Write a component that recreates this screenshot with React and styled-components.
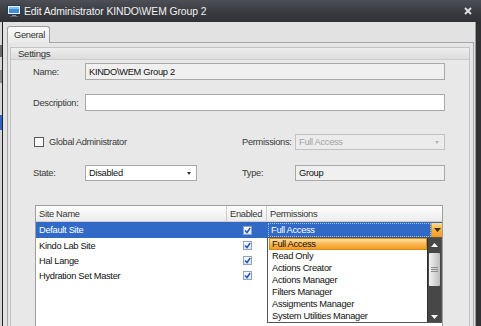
import React from 'react';
import styled, { createGlobalStyle } from 'styled-components';

const GlobalStyle = createGlobalStyle`
  html, body {
    margin: 0;
    padding: 0;
    background: #2e2f32;
  }
  body {
    font-family: "Liberation Sans", Arial, sans-serif;
    font-size: 9.3px;
    letter-spacing: -0.3px;
    color: #222;
  }
  #root {
    width: 481px;
    height: 326px;
    overflow: hidden;
  }
`;

const Screen = styled.div`
  width: 481px;
  height: 326px;
  display: flex;
  flex-direction: column;
  overflow: hidden;
`;

const TitleBar = styled.div`
  flex: none;
  height: 22px;
  display: flex;
  align-items: center;
  gap: 3px;
  padding: 0 9px 0 7px;
  background: linear-gradient(#4c4f55, #393b40 55%, #2f3135);
  color: #f2f2f2;
  font-size: 10.4px;
`;

const TitleText = styled.span`
  flex: 1;
  letter-spacing: -0.1px;
`;

const Frame = styled.div`
  flex: 1;
  min-height: 0;
  display: flex;
`;

// sliver of the application window behind the dialog
const Backdrop = styled.div`
  width: 2px;
  border-right: 1px solid #1f1f1f;
  background: linear-gradient(
    #d6d6d6 0 23px,
    #6b6b6b 23px 35px,
    #d6d6d6 35px 48px,
    #8d8d8d 48px 61px,
    #d6d6d6 61px 93px,
    #2f66c2 93px 108px,
    #d6d6d6 108px
  );
`;

const DarkEdge = styled.div`
  width: 5px;
  background: #303135;
  border-left: 1px solid #9a9a9a;
`;

const Window = styled.div`
  flex: 1;
  display: flex;
  flex-direction: column;
  padding: 4px 1px 0 4px;
  background: #e2e2e2;
`;

const TabStrip = styled.div`
  display: flex;
  height: 16px;
`;

const Tab = styled.div`
  position: relative;
  z-index: 1;
  width: 43px;
  height: 17px;
  box-sizing: border-box;
  padding: 3px 0 0 6px;
  border: 1px solid #9c9c9c;
  border-bottom: none;
  border-radius: 3px 3px 0 0;
  background: linear-gradient(#fbfbfb, #e9e9e9);
  color: #333;
`;

const TabPanel = styled.div`
  flex: 1;
  min-height: 0;
  display: flex;
  border: 1px solid #a6a6a6;
  border-bottom: none;
  padding: 4px 3px 0 2px;
  background: #e6e6e6;
`;

const Group = styled.div`
  flex: 1;
  display: flex;
  flex-direction: column;
  border: 1px solid #c3c3c3;
  border-bottom: none;
  overflow: hidden;
`;

const GroupHeader = styled.div`
  height: 16px;
  display: flex;
  align-items: center;
  padding-left: 7px;
  background: linear-gradient(#eeeeee, #dcdcdc);
  border-bottom: 1px solid #cbcbcb;
  color: #333;
  font-size: 9.6px;
`;

const GroupBody = styled.div`
  flex: 1;
  padding: 3px 0 0 22px;
  background: #e8e8e8;
`;

const Form = styled.div`
  display: grid;
  grid-template-columns: 52px 112px 45px 53px 150px;
  grid-template-rows: 17px 14px 17px 23px 16px 15px 16px;
  align-items: center;
`;

const Label = styled.span`
  grid-row: ${p => p.row};
  grid-column: ${p => p.col || 1};
  color: #3a3a3a;
`;

const Field = styled.div`
  grid-row: ${p => p.row};
  grid-column: ${p => p.span};
  height: ${p => p.h || 17}px;
  box-sizing: border-box;
  display: flex;
  align-items: center;
  padding: 0 3px;
  border: 1px solid ${p => (p.disabled ? '#c2c2c2' : '#a9a9a9')};
  background: ${p => (p.readOnly ? '#f0f0f0' : p.disabled ? '#ececec' : '#fff')};
  color: ${p => (p.disabled ? '#a3a3a3' : '#111')};
`;

const FieldText = styled.span`
  flex: 1;
`;

const Caret = styled.span`
  width: 0;
  height: 0;
  margin-right: 2px;
  border-left: 2.5px solid transparent;
  border-right: 2.5px solid transparent;
  border-top: 3px solid ${p => p.color || '#333'};
`;

const CheckRow = styled.label`
  grid-row: 5;
  grid-column: 1 / 4;
  display: flex;
  align-items: center;
  gap: 5px;
  padding-left: 1px;
  color: #3a3a3a;
`;

const Box = styled.span`
  width: 10px;
  height: 10px;
  box-sizing: border-box;
  border: 1px solid #5a5a5a;
  background: #fafafa;
`;

const SiteGrid = styled.div`
  position: relative;
  margin: 24px 0 0 2px;
  width: 408px;
  height: 140px;
  box-sizing: border-box;
  border: 1px solid #9e9e9e;
  background: #fff;
`;

const Row = styled.div`
  display: grid;
  grid-template-columns: 191px 40px 1fr;
  height: ${p => p.h || 15}px;
  align-items: stretch;
  background: ${p => (p.selected ? '#3169c6' : 'transparent')};
  color: ${p => (p.selected ? '#fff' : '#111')};
`;

const HeaderRow = styled(Row)`
  height: 16px;
  box-sizing: border-box;
  background: linear-gradient(#ffffff, #ececec);
  border-bottom: 1px solid #cfcfcf;
  color: #333;
`;

const HeaderCell = styled.div`
  display: flex;
  align-items: center;
  padding-left: 3px;
  border-right: ${p => (p.last ? 'none' : '1px solid #cdcdcd')};
`;

const Cell = styled.div`
  display: flex;
  align-items: center;
  justify-content: ${p => (p.center ? 'center' : 'flex-start')};
  padding-left: ${p => (p.center ? 0 : 3)}px;
`;

const CheckCell = styled.span`
  width: 9px;
  height: 9px;
  box-sizing: border-box;
  display: flex;
  align-items: center;
  justify-content: center;
  border: 1px solid #8ea4c2;
  background: linear-gradient(#ffffff, #dfe6f0);
`;

const Editor = styled.div`
  display: flex;
  align-items: stretch;
  padding: 1px 0 1px 1px;
`;

const EditorText = styled.div`
  flex: 1;
  display: flex;
  align-items: center;
  padding-left: 2px;
  border: 1px dotted #a9c0ea;
  color: #fff;
`;

const DropButton = styled.div`
  width: 10px;
  display: flex;
  align-items: center;
  justify-content: center;
  background: linear-gradient(#ffd98c, #f7b13f 55%, #f29c1e);
  border-left: 1px solid #d99a3a;
`;

const Popup = styled.div`
  position: absolute;
  top: 31px;
  left: 231px;
  width: 175px;
  height: 86px;
  box-sizing: border-box;
  display: flex;
  border: 1px solid #555;
  background: #fff;
`;

const List = styled.div`
  flex: 1;
  display: flex;
  flex-direction: column;
  padding-left: 1px;
`;

const Item = styled.div`
  height: 12px;
  box-sizing: border-box;
  display: flex;
  align-items: center;
  padding-left: ${p => (p.active ? 2 : 3)}px;
  border: ${p => (p.active ? '1px solid #d88b1b' : 'none')};
  background: ${p => (p.active ? 'linear-gradient(#ffe6ad, #fbb653 50%, #f49d22)' : 'transparent')};
  color: #111;
`;

const ScrollBar = styled.div`
  width: 13px;
  display: flex;
  flex-direction: column;
  align-items: center;
  background: #474747;
  border-left: 1px solid #2e2e2e;
`;

const ScrollArrow = styled.div`
  height: ${p => p.h}px;
  display: flex;
  align-items: center;
  justify-content: center;
`;

const Thumb = styled.div`
  width: 11px;
  height: 33px;
  margin-top: 2px;
  display: flex;
  flex-direction: column;
  align-items: center;
  justify-content: center;
  gap: 1px;
  border-radius: 1px;
  background: linear-gradient(to right, #f2f2f2, #d2d2d2 60%, #bdbdbd);
`;

const Grip = styled.span`
  width: 7px;
  height: 1px;
  background: #8a8a8a;
`;

const Track = styled.div`
  flex: 1;
`;

const MonitorIcon = () => (
  <svg width="14" height="12" viewBox="0 0 14 12">
    <rect x="0.5" y="0.5" width="13" height="9" fill="#e8eef6" stroke="#2a3b55" />
    <rect x="2" y="2" width="10" height="6" fill="#3d8fdc" />
    <rect x="2" y="2" width="10" height="2" fill="#7cc2f4" />
    <rect x="5" y="10" width="4" height="1" fill="#8a96a6" />
    <rect x="3" y="11" width="8" height="1" fill="#5c6878" />
  </svg>
);

const CloseIcon = () => (
  <svg width="8" height="8" viewBox="0 0 8 8">
    <path d="M1 1 L7 7 M7 1 L1 7" stroke="#e4e4e4" strokeWidth="1.8" />
  </svg>
);

const Tick = () => (
  <svg width="7" height="7" viewBox="0 0 7 7">
    <path d="M1 3.5 L3 5.5 L6.2 1" fill="none" stroke="#1f55c4" strokeWidth="1.5" />
  </svg>
);

const Triangle = ({ up, color = '#fff' }) => (
  <svg width="7" height="4" viewBox="0 0 7 4">
    <path d={up ? 'M0 4 L3.5 0 L7 4 Z' : 'M0 0 L3.5 4 L7 0 Z'} fill={color} />
  </svg>
);

const sites = ['Default Site', 'Kindo Lab Site', 'Hal Lange', 'Hydration Set Master'];

const permissions = [
  'Full Access',
  'Read Only',
  'Actions Creator',
  'Actions Manager',
  'Filters Manager',
  'Assigments Manager',
  'System Utilities Manager',
];

const App = () => {
  return (
    <>
      <GlobalStyle />
      <Screen>
        <TitleBar>
          <MonitorIcon />
          <TitleText>Edit Administrator KINDO\WEM Group 2</TitleText>
          <CloseIcon />
        </TitleBar>
        <Frame>
          <Backdrop />
          <Window>
            <TabStrip>
              <Tab>General</Tab>
            </TabStrip>
            <TabPanel>
              <Group>
                <GroupHeader>Settings</GroupHeader>
                <GroupBody>
                  <Form>
                    <Label row={1}>Name:</Label>
                    <Field row={1} span="2 / -1" readOnly>KINDO\WEM Group 2</Field>

                    <Label row={3}>Description:</Label>
                    <Field row={3} span="2 / -1" />

                    <CheckRow>
                      <Box />
                      Global Administrator
                    </CheckRow>
                    <Label row={5} col={4}>Permissions:</Label>
                    <Field row={5} span="5" h={16} disabled>
                      <FieldText>Full Access</FieldText>
                      <Caret color="#b5b5b5" />
                    </Field>

                    <Label row={7}>State:</Label>
                    <Field row={7} span="2" h={16}>
                      <FieldText>Disabled</FieldText>
                      <Caret />
                    </Field>
                    <Label row={7} col={4}>Type:</Label>
                    <Field row={7} span="5" h={16} readOnly>Group</Field>
                  </Form>

                  <SiteGrid>
                    <HeaderRow>
                      <HeaderCell>Site Name</HeaderCell>
                      <HeaderCell>Enabled</HeaderCell>
                      <HeaderCell last>Permissions</HeaderCell>
                    </HeaderRow>
                    {sites.map((site, i) => (
                      <Row key={site} selected={i === 0} h={i === 0 ? 16 : 15}>
                        <Cell>{site}</Cell>
                        <Cell center>
                          <CheckCell><Tick /></CheckCell>
                        </Cell>
                        {i === 0 ? (
                          <Editor>
                            <EditorText>Full Access</EditorText>
                            <DropButton><Triangle color="#3a2a10" /></DropButton>
                          </Editor>
                        ) : (
                          <Cell />
                        )}
                      </Row>
                    ))}
                    <Popup>
                      <List>
                        {permissions.map((p, i) => (
                          <Item key={p} active={i === 0}>{p}</Item>
                        ))}
                      </List>
                      <ScrollBar>
                        <ScrollArrow h={13}><Triangle up /></ScrollArrow>
                        <Thumb>
                          <Grip />
                          <Grip />
                          <Grip />
                        </Thumb>
                        <Track />
                        <ScrollArrow h={10}><Triangle /></ScrollArrow>
                      </ScrollBar>
                    </Popup>
                  </SiteGrid>
                </GroupBody>
              </Group>
            </TabPanel>
          </Window>
          <DarkEdge />
        </Frame>
      </Screen>
    </>
  );
};

export default App;
